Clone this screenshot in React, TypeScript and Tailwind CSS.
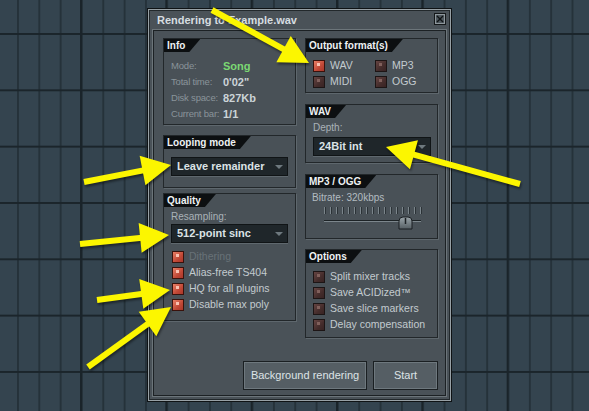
import React from "react";

type Pt = [number, number];

const arrows: { tail: Pt; tip: Pt }[] = [
  { tail: [212, 10], tip: [309, 63] },
  { tail: [84, 182], tip: [171, 165] },
  { tail: [80, 244], tip: [169, 235] },
  { tail: [97, 300], tip: [170, 290] },
  { tail: [88, 367], tip: [171, 307] },
  { tail: [520, 184], tip: [386, 147] },
];

const Arrow = ({ tail, tip }: { tail: Pt; tip: Pt }) => {
  const dx = tip[0] - tail[0];
  const dy = tip[1] - tail[1];
  const len = Math.hypot(dx, dy);
  const ux = dx / len;
  const uy = dy / len;
  const L = 29;
  const W = 15;
  const bx = tip[0] - ux * L;
  const by = tip[1] - uy * L;
  const pts = `${tip[0]},${tip[1]} ${bx - uy * W},${by + ux * W} ${bx + uy * W},${by - ux * W}`;
  return (
    <g>
      <line x1={tail[0]} y1={tail[1]} x2={bx + ux * 2} y2={by + uy * 2} stroke="#fcf600" strokeWidth={6} />
      <polygon points={pts} fill="#fcf600" />
    </g>
  );
};

const Panel = ({ title, className, children }: { title: string; className?: string; children?: React.ReactNode }) => (
  <div className={`border border-[#22272a] shadow-[1px_1px_0_#5e676d] bg-[#495157] flex flex-col ${className ?? ""}`}>
    <div className="flex h-[13px]">
      <div className="bg-[#0c0f11] text-[#eef2f4] text-[10px] font-bold leading-[13px] pl-[3px] pr-[15px] [clip-path:polygon(0_0,100%_0,calc(100%-11px)_100%,0_100%)]">
        {title}
      </div>
    </div>
    {children}
  </div>
);

const Check = ({ on }: { on?: boolean }) => (
  <div
    className={`relative w-[12px] h-[12px] shrink-0 border ${
      on
        ? "border-[#3a120c] bg-[linear-gradient(135deg,#e98067,#c14836_60%,#a9372a)]"
        : "border-[#1d1515] bg-[linear-gradient(135deg,#654442,#442c2b_60%,#382323)]"
    }`}
  >
    <div className={`absolute left-[3px] top-[2px] w-[3px] h-[3px] ${on ? "bg-[#f9c2b2]" : "bg-[#80605c]"}`} />
  </div>
);

const CheckRow = ({ label, on, dim }: { label: string; on?: boolean; dim?: boolean }) => (
  <div className="flex items-center h-[16px] gap-[5px]">
    <Check on={on} />
    <span className={`text-[10.5px] whitespace-nowrap ${dim ? "text-[#687177]" : "text-[#c3cbcf]"}`}>{label}</span>
  </div>
);

const Dropdown = ({ value, className }: { value: string; className?: string }) => (
  <div
    className={`h-[19px] bg-[#1f262a] border border-[#101416] shadow-[0_1px_0_#5f686e] flex items-center justify-between pl-[5px] pr-[4px] ${className ?? ""}`}
  >
    <span className="text-[11px] font-bold text-[#dbe2e5] leading-none">{value}</span>
    <span className="w-0 h-0 border-l-[4px] border-r-[4px] border-t-[4px] border-l-transparent border-r-transparent border-t-[#6e797f]" />
  </div>
);

const infoRows: [string, string, boolean][] = [
  ["Mode:", "Song", true],
  ["Total time:", "0'02\"", false],
  ["Disk space:", "827Kb", false],
  ["Current bar:", "1/1", false],
];

export default function App() {
  return (
    <div
      className="relative w-[589px] h-[411px] overflow-hidden bg-[#34444f] font-['Liberation_Sans',Arial,sans-serif] [background-image:linear-gradient(90deg,#1a242a_0_1.5px,transparent_1.5px),linear-gradient(#1b252b_0_2px,transparent_2px),linear-gradient(90deg,#25323a_0_1.5px,transparent_1.5px)] [background-size:85.333px_100%,100%_56.333px,21.333px_100%] [background-position:80px_0,0_33px,17px_0]"
    >
      {/* render dialog */}
      <div className="absolute left-[147px] top-[8px] w-[305px] h-[394px] bg-[#4a5258] border border-[#0f1315] shadow-[inset_0_0_0_1px_#98a1a6,inset_0_0_0_2px_#22282b] p-[2px] flex flex-col">
        <div className="h-[19px] flex items-start justify-between pl-[7px] pr-[3px]">
          <span className="text-[11px] font-bold text-[#d6dde0] leading-[19px]">Rendering to Example.wav</span>
          <div className="mt-[2px] w-[12px] h-[12px] border border-[#14181a] bg-[#4f585e] shadow-[inset_0_0_0_1px_#8e979c] flex items-center justify-center">
            <svg width="8" height="8" viewBox="0 0 8 8">
              <path d="M1 1L7 7M7 1L1 7" stroke="#0f1315" strokeWidth="1.4" />
            </svg>
          </div>
        </div>
        <div className="flex-1 mx-[3px] mb-[3px] border border-[#1c2124] shadow-[0_0_0_1px_#6c757a] pl-[9px] pr-[7px] pt-[7px] pb-[5px] flex flex-col justify-between">
          <div className="flex gap-[9px]">
            {/* left column */}
            <div className="w-[133px] flex flex-col">
              <Panel title="Info" className="h-[87px]">
                <div className="pl-[7px] pt-[6px] flex flex-col">
                  {infoRows.map(([k, v, green]) => (
                    <div key={k} className="flex items-center h-[16px]">
                      <span className="w-[52px] shrink-0 text-[9.5px] tracking-[-0.2px] text-[#8a949a] whitespace-nowrap">{k}</span>
                      <span className={`text-[11px] font-bold ${green ? "text-[#7bd873]" : "text-[#ccd4d8]"}`}>{v}</span>
                    </div>
                  ))}
                </div>
              </Panel>
              <Panel title="Looping mode" className="h-[53px] mt-[10px]">
                <Dropdown value="Leave remainder" className="mx-[7px] mt-[8px]" />
              </Panel>
              <Panel title="Quality" className="h-[128px] mt-[5px]">
                <div className="pl-[7px] pt-[4px] h-[16px] text-[10px] text-[#a9b2b7] leading-[12px]">Resampling:</div>
                <Dropdown value="512-point sinc" className="mx-[7px] mt-[1px]" />
                <div className="pl-[8px] mt-[6px] flex flex-col">
                  <CheckRow label="Dithering" on dim />
                  <CheckRow label="Alias-free TS404" on />
                  <CheckRow label="HQ for all plugins" on />
                  <CheckRow label="Disable max poly" on />
                </div>
              </Panel>
            </div>
            {/* right column */}
            <div className="w-[133px] flex flex-col">
              <Panel title="Output format(s)" className="h-[55px]">
                <div className="pl-[7px] pt-[6px] grid grid-cols-[62px_1fr]">
                  <CheckRow label="WAV" on />
                  <CheckRow label="MP3" />
                  <CheckRow label="MIDI" />
                  <CheckRow label="OGG" />
                </div>
              </Panel>
              <Panel title="WAV" className="h-[59px] mt-[11px]">
                <div className="pl-[7px] pt-[4px] h-[16px] text-[10px] text-[#a9b2b7] leading-[12px]">Depth:</div>
                <Dropdown value="24Bit int" className="ml-[7px] mr-[6px] mt-[3px]" />
              </Panel>
              <Panel title="MP3 / OGG" className="h-[65px] mt-[11px]">
                <div className="pl-[6px] pt-[4px] h-[16px] text-[10px] text-[#b3bcc1] leading-[12px]">Bitrate: 320kbps</div>
                <div className="relative ml-[18px] w-[97px] h-[24px] mt-[3px]">
                  <div className="flex justify-between h-[7px]">
                    {Array.from({ length: 17 }).map((_, i) => (
                      <div key={i} className="w-[1px] h-[7px] bg-[#7b858b] shadow-[1px_0_0_#2b3236]" />
                    ))}
                  </div>
                  <div className="mt-[6px] h-[1px] bg-[#1d2326] shadow-[0_1px_0_#7c868c]" />
                  <svg className="absolute left-[74px] top-[9px]" width="15" height="14" viewBox="0 0 15 14">
                    <defs>
                      <linearGradient id="th" x1="0" y1="0" x2="0" y2="1">
                        <stop offset="0" stopColor="#9aa4a9" />
                        <stop offset="1" stopColor="#555e63" />
                      </linearGradient>
                    </defs>
                    <path d="M1 13V5Q1 1 5 1H10Q14 1 14 5V13Z" fill="url(#th)" stroke="#1a1f22" />
                    <path d="M7.5 2V8" stroke="#1c2124" strokeWidth="1.5" />
                  </svg>
                </div>
              </Panel>
              <Panel title="Options" className="h-[89px] mt-[10px]">
                <div className="pl-[7px] pt-[6px] flex flex-col">
                  <CheckRow label="Split mixer tracks" />
                  <CheckRow label="Save ACIDized™" />
                  <CheckRow label="Save slice markers" />
                  <CheckRow label="Delay compensation" />
                </div>
              </Panel>
            </div>
          </div>
          <div className="flex justify-end gap-[6px]">
            <button className="w-[124px] h-[29px] bg-[#555e64] border border-[#1a1f22] shadow-[inset_0_0_0_1px_#6e787e] text-[11px] text-[#dde3e6]">
              Background rendering
            </button>
            <button className="w-[65px] h-[29px] bg-[#555e64] border border-[#1a1f22] shadow-[inset_0_0_0_1px_#6e787e] text-[11px] text-[#dde3e6]">
              Start
            </button>
          </div>
        </div>
      </div>
      {/* annotation arrows */}
      <svg
        className="absolute left-0 top-0 pointer-events-none drop-shadow-[1px_2px_1px_rgba(0,0,0,0.45)]"
        width="589"
        height="411"
        viewBox="0 0 589 411"
      >
        {arrows.map((a, i) => (
          <Arrow key={i} tail={a.tail} tip={a.tip} />
        ))}
      </svg>
    </div>
  );
}
